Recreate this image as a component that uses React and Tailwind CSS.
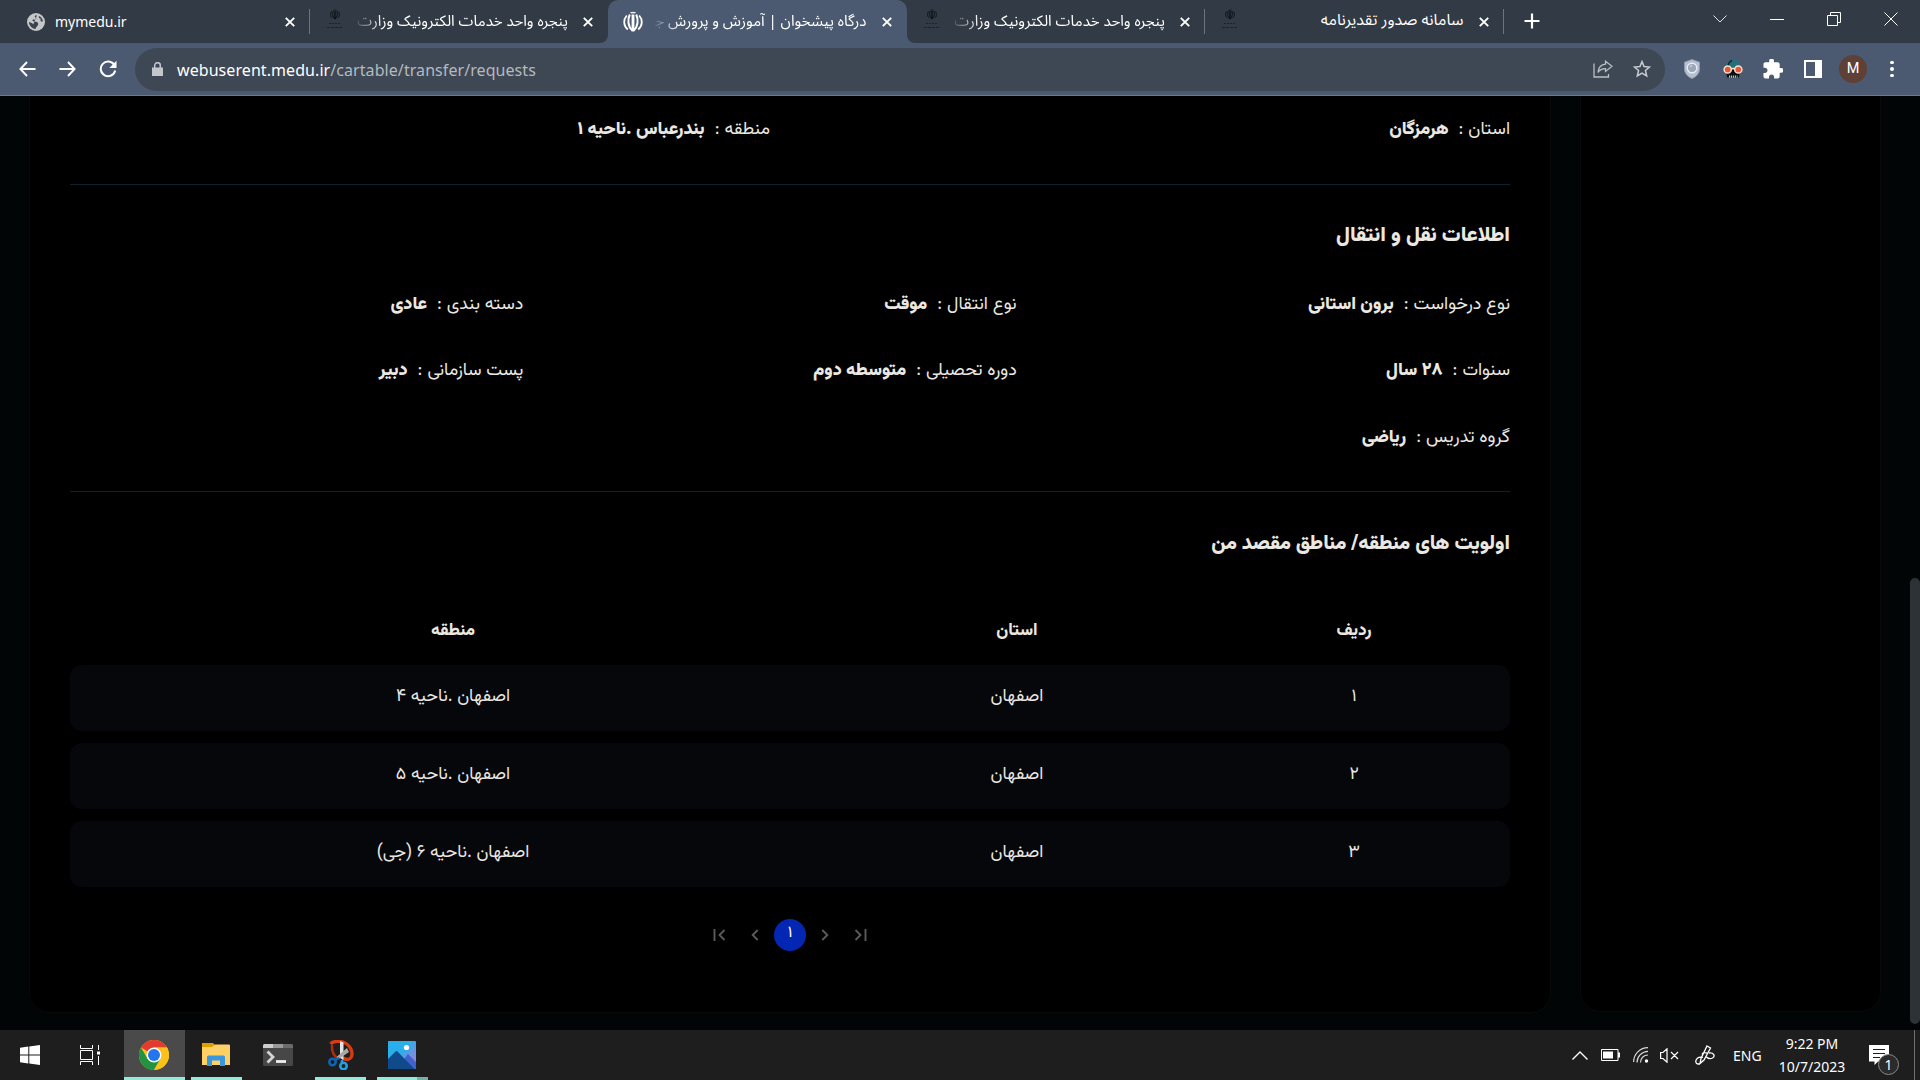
const FA = "font-[Vazirmatn,'Noto_Sans_Arabic','DejaVu_Sans',sans-serif]";

function Emblem({ className }) {
  return (
    <svg viewBox="0 0 20 22" className={className} fill="none" stroke="currentColor">
      <path d="M10 3.500V20.500" strokeWidth="2.800" />
      <path d="M7.600 1.200Q8.800 2.600 10 1.400Q11.200 2.600 12.400 1.200" strokeWidth="1.300" />
      <path d="M6.800 3.500C4.600 8 4.600 15.500 9.400 19.500" strokeWidth="2" />
      <path d="M13.200 3.500C15.400 8 15.400 15.500 10.600 19.500" strokeWidth="2" />
      <path d="M3.800 4.500C0.200 8.500 0.200 14.500 4.800 18.500" strokeWidth="1.800" />
      <path d="M16.200 4.500C19.800 8.500 19.800 14.500 15.200 18.500" strokeWidth="1.800" />
    </svg>
  );
}

function MinistryIcon() {
  return (
    <span className="flex w-5 flex-col items-center gap-0.5 pb-1 text-[#0d1115]">
      <Emblem className="h-[11px] w-[10px]" />
      <svg viewBox="0 0 18 8" className="h-2 w-[18px]" stroke="#1c2229" strokeWidth="1" fill="none">
        <path d="M3 1.500H15" strokeDasharray="2 1" />
        <path d="M1 5.500H17" strokeDasharray="3 1" />
      </svg>
    </span>
  );
}

function TabClose() {
  return (
    <svg viewBox="0 0 10 10" className="size-[10px] shrink-0" stroke="#fff" strokeWidth="1.900">
      <path d="M0.800 0.800L9.200 9.200M9.200 0.800L0.800 9.200" />
    </svg>
  );
}

function Tab({ icon, title, active, fade, divider, ltr, size = 'text-[15px]' }) {
  return (
    <div className={`relative flex h-[43px] w-[298.5px] shrink-0 items-center px-[15px] ${active ? 'rounded-t-[10px] bg-[#4b5a70]' : ''}`}>
      <span className="flex w-5 shrink-0 justify-center">{icon}</span>
      <span
        dir={ltr ? 'ltr' : 'rtl'}
        className={`ml-[9px] mr-[15px] flex-1 whitespace-nowrap pb-px text-white ${size} ${ltr ? "font-['Noto_Sans',sans-serif]" : "font-['Noto_Sans_Arabic','DejaVu_Sans',sans-serif]"} ${fade ? '[mask-image:linear-gradient(to_right,transparent,black_28px)]' : ''}`}
      >
        {title}
      </span>
      <TabClose />
      {divider && <span className="absolute right-0 top-[9px] h-[25px] w-px bg-[#6b7480]" />}
      {active && (
        <>
          <span className="absolute -left-2 bottom-0 size-2 bg-[#4b5a70]"><span className="block size-2 rounded-br-lg bg-[#323a45]" /></span>
          <span className="absolute -right-2 bottom-0 size-2 bg-[#4b5a70]"><span className="block size-2 rounded-bl-lg bg-[#323a45]" /></span>
        </>
      )}
    </div>
  );
}

function TabStrip() {
  const long = 'پنجره واحد خدمات الکترونیک وزارت';
  const globe = (
    <svg viewBox="0 0 18 18" className="size-[18px]">
      <circle cx="9" cy="9" r="9" fill="#c4c6c8" />
      <path d="M10 2.200C7.500 2 7.200 4 8.600 4.400C10.500 5 8.500 7 6.800 6.600C5 6.300 5 8.200 6.800 8.600C9 8.500 11.500 9.200 11.200 11.200C10.800 13.200 9 13.500 8.500 16C5 15.500 2 12.500 2 9C4 9.800 5.500 10 6.300 11.500M12 3C11 4.500 12.500 5.500 14 6C12.500 7.500 14 8.800 16 8.600C15.500 5.500 14 4 12 3Z" fill="#3a424d" />
    </svg>
  );
  return (
    <div className="flex h-[43px] bg-[#323a45] pl-[11px]">
      <Tab icon={globe} title="mymedu.ir" divider ltr size="text-[14px]" />
      <Tab icon={<MinistryIcon />} title={long} fade />
      <Tab icon={<Emblem className="h-[22px] w-5 text-white" />} title={'درگاه پیشخوان | آموزش و پرورش ج\u200d'} active fade />
      <Tab icon={<MinistryIcon />} title={long} fade divider />
      <Tab icon={<MinistryIcon />} title="سامانه صدور تقدیرنامه" divider size="text-[15.900px]" />
      <svg viewBox="0 0 16 16" className="ml-5 mt-[13px] size-4" stroke="#fff" strokeWidth="2.200"><path d="M8 0.500V15.500M0.500 8H15.500" /></svg>
      <div className="ml-auto mr-[22px] flex items-center gap-[43px] pb-[6px]">
        <svg viewBox="0 0 14 8" className="h-2 w-[14px]" stroke="#dfe2e6" fill="none"><path d="M0.500 0.500L7 7L13.500 0.500" /></svg>
        <svg viewBox="0 0 14 14" className="size-[14px]" stroke="#fff" fill="none"><path d="M0 7.500H14" /></svg>
        <svg viewBox="0 0 14 14" className="size-[14px]" stroke="#fff" fill="none"><path d="M0.500 3.500H10.500V13.500H0.500ZM3.500 3.500V0.500H13.500V10.500H10.500" /></svg>
        <svg viewBox="0 0 14 14" className="size-[14px]" stroke="#fff" fill="none"><path d="M0.500 0.500L13.500 13.500M13.500 0.500L0.500 13.500" /></svg>
      </div>
    </div>
  );
}

function Toolbar() {
  return (
    <div className="flex h-[53px] items-center border-b border-[#6d7a8c] bg-[#4b5a70] pl-[19px]">
      <svg viewBox="0 0 17 16" className="h-4 w-[17px]" stroke="#fff" strokeWidth="1.900" fill="none"><path d="M16.500 8H1.500M8 1L1.400 8L8 15" /></svg>
      <svg viewBox="0 0 17 16" className="ml-[23px] h-4 w-[17px]" stroke="#fff" strokeWidth="1.900" fill="none"><path d="M0.500 8H15.500M9 1L15.600 8L9 15" /></svg>
      <svg viewBox="0 0 18 18" className="ml-[23px] size-[18px]" fill="none">
        <path d="M15.300 5A7.300 7.300 0 1 0 16.200 10.500" stroke="#fff" strokeWidth="2" />
        <path d="M17.500 0.800V8H10.300Z" fill="#fff" />
      </svg>
      <div className="ml-[18px] flex h-[43px] w-[1530px] items-center rounded-full bg-[#3e4855] pl-[17px] pr-[14px]">
        <svg viewBox="0 0 11 14" className="h-[14px] w-[11px]"><path d="M0 5.500H11V14H0Z" fill="#c3c7cc" /><path d="M2.700 6V3.500A2.800 2.800 0 0 1 8.300 3.500V6" stroke="#c3c7cc" strokeWidth="1.500" fill="none" /></svg>
        <span className="ml-[14px] pt-0.5 font-['Noto_Sans',sans-serif] text-[16px] tracking-[0.07px] text-[#b4b9bf]"><span className="text-white">webuserent.medu.ir</span>/cartable/transfer/requests</span>
        <svg viewBox="0 0 20 18" className="ml-auto h-[18px] w-5" stroke="#b9bec4" strokeWidth="1.300" fill="none"><path d="M1 3.500V17H15.500V14" /><path d="M12.500 1.200L19 6.300L12.500 11.400V8.700C9 8.600 6.800 9.800 5 12.500C5.400 8 8 4.500 12.500 4.100Z" /></svg>
        <svg viewBox="0 0 20 20" className="ml-[20px] size-[18px]" stroke="#c6cacf" strokeWidth="1.700" fill="none"><path d="M10 1.800L12.300 7.300L18.300 7.800L13.800 11.700L15.200 17.600L10 14.500L4.800 17.600L6.200 11.700L1.700 7.800L7.700 7.300Z" /></svg>
      </div>
      <svg viewBox="0 0 16 20" className="ml-[19px] h-5 w-4">
        <path d="M8 0.500L15.500 3.200V10C15.500 14.500 12 18 8 19.500C4 18 0.500 14.500 0.500 10V3.200Z" fill="#b5bfce" stroke="#8f9aac" />
        <circle cx="8" cy="9" r="4.800" fill="#9aa7bb" stroke="#e8edf4" strokeWidth="1.400" /><path d="M6 8A2.500 2.500 0 0 1 8 6.800" stroke="#eef2f7" fill="none" />
      </svg>
      <svg viewBox="0 0 20 20" className="ml-[23px] size-5">
        <path d="M2.500 8.500C2.500 3.500 6 0.800 11 0.800C15.500 1.300 17.500 5 17.500 8.500Z" fill="#23707a" /><path d="M5 7C5.500 4 6.500 2.500 9 1.500" stroke="#12242a" strokeWidth="1.500" fill="none" />
        <path d="M3 11H17L16 18.500H4Z" fill="#0c0f12" />
        <circle cx="4.700" cy="10.500" r="3.600" fill="#e8563a" stroke="#f4e3cf" strokeWidth="1.500" /><circle cx="15.300" cy="10.500" r="3.600" fill="#e8563a" stroke="#f4e3cf" strokeWidth="1.500" />
        <path d="M8.300 9.500H11.700" stroke="#f4e3cf" strokeWidth="1.400" />
        <path d="M6 17.700H14.500" stroke="#8ed5d2" strokeWidth="2.200" strokeDasharray="1.200 0.800" />
      </svg>
      <svg viewBox="1.500 1.500 21 21" className="ml-[20px] size-5" fill="#fff"><path d="M20.500 11H19V7c0-1.100-.9-2-2-2h-4V3.500a2.500 2.500 0 0 0-5 0V5H4c-1.100 0-1.990.9-1.990 2v3.800H3.500c1.490 0 2.700 1.210 2.700 2.700s-1.210 2.700-2.700 2.700H2V20c0 1.100.9 2 2 2h3.800v-1.500c0-1.490 1.210-2.700 2.700-2.700s2.700 1.210 2.700 2.700V22H17c1.100 0 2-.9 2-2v-4h1.500a2.500 2.500 0 0 0 0-5z" /></svg>
      <span className="ml-[21px] h-[18px] w-[18px] border-[2.500px] border-r-[7px] border-white" />
      <span className="ml-[17px] flex size-7 items-center justify-center rounded-full bg-[#5e4037] font-[Roboto,sans-serif] text-[14.500px] text-white">M</span>
      <span className="ml-[23px] flex flex-col gap-[3px]"><i className="size-[3.500px] rounded-full bg-white" /><i className="size-[3.500px] rounded-full bg-white" /><i className="size-[3.500px] rounded-full bg-white" /></span>
    </div>
  );
}

function Field({ label, value }) {
  return (
    <div className="flex h-[26px] items-center whitespace-nowrap text-[17.800px]">
      <span>{label}</span>
      <span className="mr-[5px]">:</span>
      <b className="mr-[10px] font-black">{value}</b>
    </div>
  );
}

function SectionTitle({ children, size = 'text-[20.300px]' }) {
  return <h2 className={`flex h-[30px] items-center font-black ${size}`}>{children}</h2>;
}

const ROWS = [
  ['۱', 'اصفهان', 'اصفهان .ناحیه ۴'],
  ['۲', 'اصفهان', 'اصفهان .ناحیه ۵'],
  ['۳', 'اصفهان', 'اصفهان .ناحیه ۶ (جی)'],
];

function Pager() {
  return (
    <div dir="ltr" className="mt-8 flex h-8 items-center justify-center text-[#5b5a57]">
      <svg viewBox="0 0 13 12" className="h-3 w-[13px]" stroke="currentColor" strokeWidth="1.900" fill="none"><path d="M1.500 0V12M11.500 1L6.500 6L11.500 11" /></svg>
      <svg viewBox="0 0 8 12" className="ml-[25px] h-3 w-2" stroke="currentColor" strokeWidth="1.900" fill="none"><path d="M6.700 1L1.700 6L6.700 11" /></svg>
      <span className="mx-[15px] flex size-8 items-center justify-center rounded-full bg-[#0326b3] pb-0.5 text-[16px] text-white">۱</span>
      <svg viewBox="0 0 8 12" className="mr-[25px] h-3 w-2" stroke="currentColor" strokeWidth="1.900" fill="none"><path d="M1.300 1L6.300 6L1.300 11" /></svg>
      <svg viewBox="0 0 13 12" className="h-3 w-[13px]" stroke="currentColor" strokeWidth="1.900" fill="none"><path d="M11.500 0V12M1.500 1L6.500 6L1.500 11" /></svg>
    </div>
  );
}

function Content() {
  return (
    <main className="flex h-[934px] bg-[#020506] pl-[29px]">
      <section dir="rtl" className={`h-[917px] w-[1522px] overflow-hidden rounded-b-[20px] border border-t-0 border-[#07090a] bg-black px-10 pt-[21px] text-[#ebe8e2] ${FA}`}>
        <div className="grid grid-cols-2 gap-x-10">
          <Field label="استان" value="هرمزگان" />
          <Field label="منطقه" value="بندرعباس .ناحیه ۱" />
        </div>
        <div className="mt-[41px] h-px bg-[#10202f]" />
        <div className="mt-[37px]"><SectionTitle size="text-[20.800px]">اطلاعات نقل و انتقال</SectionTitle></div>
        <div className="mt-10 grid grid-cols-3 gap-x-10 gap-y-[40.500px]">
          <Field label="نوع درخواست" value="برون استانی" />
          <Field label="نوع انتقال" value="موقت" />
          <Field label="دسته بندی" value="عادی" />
          <Field label="سنوات" value="۲۸ سال" />
          <Field label="دوره تحصیلی" value="متوسطه دوم" />
          <Field label="پست سازمانی" value="دبیر" />
          <Field label="گروه تدریس" value="ریاضی" />
        </div>
        <div className="mt-10 h-px bg-[#10202f]" />
        <div className="mt-[37px]"><SectionTitle size="text-[20px]">اولویت های منطقه/ مناطق مقصد من</SectionTitle></div>
        <div className="mt-[60px] grid h-[26px] grid-cols-[312px_362px_766px] items-center text-center text-[17px] font-extrabold">
          <span>ردیف</span><span>استان</span><span>منطقه</span>
        </div>
        <div className="mt-5 flex flex-col gap-3">
          {ROWS.map((r) => (
            <div key={r[0]} className="grid h-[66px] grid-cols-[312px_362px_766px] items-center rounded-xl bg-[#06070b] pb-0.5 text-center text-[17.600px]">
              {r.map((c, i) => <span key={i}>{c}</span>)}
            </div>
          ))}
        </div>
        <Pager />
      </section>
      <aside className="ml-[29px] h-[916px] w-[301px] rounded-b-[20px] border border-t-0 border-[#07090a] bg-black" />
      <div className="ml-auto flex w-[10px] flex-col justify-end pb-1.5"><span className="h-[446px] rounded-full bg-[#2c3236]" /></div>
    </main>
  );
}

function TaskButton({ width, bar, children, active }) {
  return (
    <div className={`relative flex h-[50px] items-center justify-center ${width} ${active ? 'bg-[#4a4a4a]' : ''}`}>
      {children}
      {bar}
    </div>
  );
}

function Taskbar() {
  return (
    <footer className="flex h-[50px] items-stretch bg-[#1e1e1e] pl-5 text-white">
      <TaskButton width="w-5"><svg viewBox="0 0 20 20" className="size-5" fill="#fff"><path d="M0 2.800L8.300 1.600V9.500H0ZM9.300 1.500L20 0V9.500H9.300ZM0 10.500H8.300V18.400L0 17.200ZM9.300 10.500H20V20L9.300 18.500Z" /></svg></TaskButton>
      <TaskButton width="ml-10 w-5"><svg viewBox="0 0 20 20" className="size-5" stroke="#fff" fill="none"><path d="M0.500 0V3.500H12.500V0M0.500 20V16.500H12.500V20M0.500 5.500H12.500V14.500H0.500ZM18.500 0V5M18.500 11V20" /><path d="M17 6.500H20V9.500H17Z" fill="#fff" stroke="none" /></svg></TaskButton>
      <TaskButton width="ml-6 w-[61px]" active bar={<span className="absolute bottom-0 left-0 h-[3px] w-full bg-[#93e9da]" />}>
        <svg viewBox="0 0 48 48" className="mr-px size-[30px]">
          <circle cx="24" cy="24" r="24" fill="#fdc11c" />
          <path d="M24 24L3.200 12A24 24 0 0 1 44.800 12H24Z" fill="#e33b2e" />
          <path d="M3.200 12L13.600 30L24 36L24 48A24 24 0 0 1 3.200 12Z" fill="#229342" />
          <path d="M24 48L34.400 30L24 34L13.600 30Z" fill="#229342" />
          <path d="M24 48L34.400 30L36 24L44.800 12A24 24 0 0 1 24 48Z" fill="#fdc11c" />
          <path d="M24 12H44.800A24 24 0 0 1 46 15H30Z" fill="#fdc11c" />
          <circle cx="24" cy="24" r="12" fill="#fff" /><circle cx="24" cy="24" r="9.600" fill="#2277ee" />
        </svg>
      </TaskButton>
      <TaskButton width="ml-1.5 w-[51px]" bar={<span className="absolute bottom-0 left-0 h-[3px] w-full bg-[#93e9da]" />}>
        <svg viewBox="0 0 28 23" className="mb-px mr-px h-[23px] w-7"><path d="M0 0H11L13 2V6H0Z" fill="#dea000" /><path d="M0 4H10L13 1.500H27Q28 1.500 28 2.500V22H0Z" fill="#fdd165" /><path d="M5 23V14Q5 12.500 6.500 12.500H21.500Q23 12.500 23 14V23H18V17.500H10V23Z" fill="#3a96dd" /></svg>
      </TaskButton>
      <TaskButton width="ml-[21px] w-[30px]">
        <svg viewBox="0 0 30 22" className="h-[22px] w-[30px]"><rect width="30" height="22" rx="1.500" fill="#474747" /><path d="M0 4V1.500Q0 0 1.500 0H10V4Z" fill="#cdcdcd" /><path d="M10 0H20V4H10Z" fill="#999" /><path d="M20 0H28.500Q30 0 30 1.500V4H20Z" fill="#6b6b6b" /><path d="M4.500 7.500L10 13L4.500 18.500" stroke="#d5d5d5" strokeWidth="2.800" fill="none" /><path d="M13 17.500H23" stroke="#efefef" strokeWidth="2.800" /></svg>
      </TaskButton>
      <TaskButton width="ml-[22px] w-[51px]" bar={<span className="absolute bottom-0 left-0 h-[3px] w-full bg-[#93e9da]" />}>
        <svg viewBox="0 0 26 30" className="h-[30px] w-[26px]" fill="none">
          <path d="M2.500 4C5 1 12 0.500 16 2.500C23 5.500 25.500 13 23 17.500C21.500 20 18 20 15 18" stroke="#d83b10" strokeWidth="3.400" />
          <path d="M4 5C3.500 11 6 16 10 19" stroke="#b02c0b" strokeWidth="2.400" />
          <path d="M12 1L15.500 2.500V20L12 18Z" fill="#e4e4e4" /><path d="M19 8L21 12L10 19.500L8.500 17Z" fill="#a8a8a8" />
          <circle cx="4.500" cy="22" r="3.200" stroke="#0f62b4" strokeWidth="2.600" /><circle cx="15.500" cy="26" r="3.200" stroke="#1ea0e6" strokeWidth="2.600" />
          <path d="M7 20L11 18" stroke="#0f62b4" strokeWidth="2.500" /><path d="M14 20V23" stroke="#1ea0e6" strokeWidth="2.500" />
        </svg>
      </TaskButton>
      <TaskButton width="ml-[11px] w-[51px]" bar={<span className="absolute bottom-0 left-0 h-[3px] w-full border-r-[11px] border-[#74b0a6] bg-[#93e9da]" />}>
        <svg viewBox="0 0 28 28" className="mr-px size-7">
          <defs><linearGradient id="sky" x1="0" y1="0" x2="1" y2="1"><stop offset="0.400" stopColor="#29b0ec" /><stop offset="0.800" stopColor="#8f86dc" /></linearGradient></defs>
          <rect width="28" height="28" rx="1" fill="url(#sky)" /><path d="M12 24L19.500 13.500Q20 13 20.500 13.500L28 21V28H12Z" fill="#3f62cc" /><path d="M0 18L7.500 10.500Q8.500 9.700 9.500 10.500L26.500 28H0Z" fill="#114a8b" /><circle cx="18.500" cy="6.500" r="2.600" fill="#fff" />
        </svg>
      </TaskButton>
      <div className="ml-auto flex items-center font-['Noto_Sans',sans-serif]">
        <svg viewBox="0 0 16 9" className="h-[9px] w-4" stroke="#fff" strokeWidth="1.400" fill="none"><path d="M0.500 8.500L8 1L15.500 8.500" /></svg>
        <svg viewBox="0 0 19 12" className="ml-[13px] h-3 w-[19px]"><path d="M0.500 0.500H17V11.500H0.500Z" stroke="#fff" fill="none" /><path d="M2 2.500H12V9.500H2ZM17 3.500H19V8.500H17Z" fill="#fff" /></svg>
        <svg viewBox="0 0 16 16" className="ml-[13px] size-4" stroke="#d8d8d8" strokeWidth="1.200" fill="none"><path d="M0.600 15C0.600 7 7 0.600 15 0.600M4 15.500C4 9.500 9 4.300 15 4.300M7.500 15.500C7.500 11.500 10.500 8 15 8" /><circle cx="13.500" cy="14" r="1.700" fill="#fff" stroke="none" /></svg>
        <svg viewBox="0 0 19 15" className="ml-[11px] h-[15px] w-[19px]" stroke="#fff" strokeWidth="1.200" fill="none"><path d="M0.600 4.500H3L7 0.800V14.200L3 10.500H0.600ZM11 4L18 11M18 4L11 11" /></svg>
        <svg viewBox="0 0 20 20" className="ml-[16px] size-5" stroke="#fff" strokeWidth="1.300" fill="none"><path d="M12 1L15.500 3L9 15L5 18.500L6 13.500ZM8 12.500C3 11 0.500 14.500 0.800 17C1.200 19.800 5 19.500 6 17M13 9C10.500 7 7.500 7.500 7 9.500M14 8C19 7.500 20.500 11 17.500 13C15.500 14 13 13.500 11.500 12" /></svg>
        <span className="ml-[18px] w-7 text-[14px]">ENG</span>
        <div className="ml-[17px] flex w-[68px] flex-col text-center text-[14px] leading-[23px]"><span>9:22 PM</span><span>10/7/2023</span></div>
        <div className="relative ml-[23px] size-5">
          <svg viewBox="0 0 20 20" className="size-5"><path d="M0 0H20V16.500H9L5.500 20V16.500H0Z" fill="#fff" /><path d="M4 4.500H16M4 8.500H16M4 12.500H11" stroke="#1e1e1e" strokeWidth="1.200" /></svg>
          <span className="absolute left-[9px] top-[9px] flex size-[21px] items-center justify-center rounded-full border border-[#8a8a8a] bg-[#2b2b2b] text-[14px] leading-none">1</span>
        </div>
        <span className="ml-[25px] mr-[5px] h-[50px] w-px bg-[#6f6f6f]" />
      </div>
    </footer>
  );
}

export default function App() {
  return (
    <div className="flex h-[1080px] w-[1920px] flex-col overflow-hidden bg-black">
      <TabStrip />
      <Toolbar />
      <Content />
      <Taskbar />
    </div>
  );
}
